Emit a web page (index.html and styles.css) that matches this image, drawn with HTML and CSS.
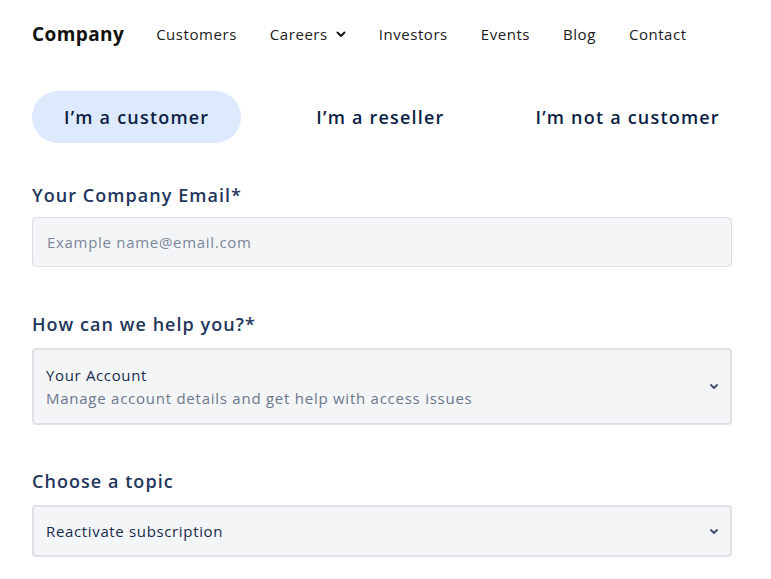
FILE: index.html
```html
<!DOCTYPE html>
<html lang="en">
<head>
<meta charset="utf-8">
<title>Contact</title>
<link rel="stylesheet" href="styles.css">
</head>
<body>
<header class="nav">
  <div class="brand">Company</div>
  <nav class="links">
    <a class="link">Customers</a>
    <a class="link">Careers
      <svg class="caret" width="10" height="7" viewBox="0 0 10 7"><path d="M1.5 1.5 L5 5 L8.5 1.5" fill="none" stroke="#1a1a1a" stroke-width="2" stroke-linecap="round" stroke-linejoin="round"/></svg>
    </a>
    <a class="link">Investors</a>
    <a class="link">Events</a>
    <a class="link">Blog</a>
    <a class="link">Contact</a>
  </nav>
</header>
<main class="main">
  <div class="tabs">
    <div class="tab active">I’m a customer</div>
    <div class="tab">I’m a reseller</div>
    <div class="tab">I’m not a customer</div>
  </div>

  <div class="field">
    <label class="label label-email">Your Company Email*</label>
    <div class="input"><span class="placeholder">Example name@email.com</span></div>
  </div>

  <div class="field field-help">
    <label class="label">How can we help you?*</label>
    <div class="select tall">
      <div class="select-text">
        <div class="value">Your Account</div>
        <div class="sub">Manage account details and get help with access issues</div>
      </div>
      <svg class="chev" width="10" height="7" viewBox="0 0 10 7"><path d="M2 2 L5 5 L8 2" fill="none" stroke="#44546f" stroke-width="2" stroke-linecap="round" stroke-linejoin="round"/></svg>
    </div>
  </div>

  <div class="field">
    <label class="label">Choose a topic</label>
    <div class="select">
      <div class="select-text">
        <div class="value">Reactivate subscription</div>
      </div>
      <svg class="chev" width="10" height="7" viewBox="0 0 10 7"><path d="M2 2 L5 5 L8 2" fill="none" stroke="#44546f" stroke-width="2" stroke-linecap="round" stroke-linejoin="round"/></svg>
    </div>
  </div>
</main>
</body>
</html>
```
FILE: styles.css
```css
* { box-sizing: border-box; }
html, body { margin: 0; padding: 0; background: #fff; }
body {
  font-family: "Open Sans", "Noto Sans", sans-serif;
  color: #172b4d;
  width: 771px;
}
.nav {
  display: flex;
  align-items: center;
  height: 68px;
  padding: 0 32px;
}
.brand {
  font-size: 19px;
  font-weight: 700;
  color: #111;
  margin-right: 32px;
  letter-spacing: 0.4px;
}
.links {
  display: flex;
  align-items: center;
  gap: 33px;
}
.link {
  font-size: 15px;
  color: #1a1a1a;
  display: flex;
  align-items: center;
  gap: 8px;
  letter-spacing: 0.55px;
}
.caret { display: block; }
.main { padding: 23px 32px 0; }
.tabs {
  display: flex;
  align-items: center;
  gap: 59px;
  margin-bottom: 40px;
}
.tab {
  height: 52px;
  display: flex;
  align-items: center;
  font-size: 18px;
  font-weight: 600;
  color: #0b1e45;
  padding: 0 16px;
  letter-spacing: 1.2px;
}
.tab.active {
  background: #dde9fd;
  border-radius: 26px;
  padding: 0 32px;
}
.field { margin-bottom: 45px; }
.field-help { margin-bottom: 44px; }
.label {
  display: block;
  font-size: 18px;
  font-weight: 600;
  color: #22365c;
  margin-bottom: 12px;
  letter-spacing: 1.05px;
}
.label-email { margin-bottom: 10px; }
.input {
  height: 50px;
  background: #f4f5f7;
  border: 1px solid #dcdee3;
  border-radius: 4px;
  display: flex;
  align-items: center;
  padding: 0 14px;
  width: 700px;
}
.placeholder {
  font-size: 15px;
  color: #7a869a;
  letter-spacing: 0.7px;
}
.select {
  width: 700px;
  height: 52px;
  background: #f4f5f7;
  border: 2px solid #dfe1e6;
  border-radius: 4px;
  display: flex;
  align-items: center;
  justify-content: space-between;
  padding: 0 11px 0 12px;
}
.select.tall { height: 77px; }
.select-text { display: flex; flex-direction: column; gap: 3px; }
.value {
  font-size: 15px;
  color: #172b4d;
  letter-spacing: 0.65px;
}
.sub {
  font-size: 15px;
  color: #6b778c;
  letter-spacing: 0.75px;
}
.chev { display: block; }
```
